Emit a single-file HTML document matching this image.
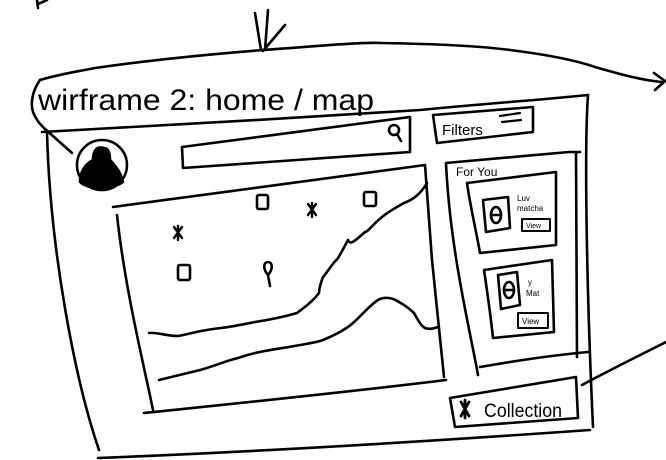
<!DOCTYPE html>
<html><head><meta charset="utf-8"><style>
html,body{margin:0;padding:0;background:#fff;width:666px;height:460px;overflow:hidden}
svg{display:block}
text{font-family:"Liberation Sans",sans-serif;fill:#000}
</style></head><body>
<svg width="666" height="460" viewBox="0 0 666 460" fill="none" stroke="#000" stroke-width="2.6" stroke-linecap="round" stroke-linejoin="round">
<path d="M37 0 L38 8 M38 4 L47 0"/>
<path d="M255 13 L261 50 M268 10 L265 50 M285 25 L263 51"/>
<path d="M40 80 C60 74 75 72 95 68 C150 60 200 55 263 50 C320 46 360 42 382 43 C440 44 480 46 510 50 C550 55 575 60 595 67 C620 74 640 80 662 82"/>
<path d="M654 73 L665 81 L655 90"/>
<path d="M40 80 C33 90 30 102 33 112 C36 120 40 124 44 128 L72 153"/>
<path d="M42 132 C150 126 300 118 420 110 C480 104 540 100 588 95"/>
<text x="38" y="110" font-size="30" stroke="none" textLength="336" lengthAdjust="spacingAndGlyphs">wirframe 2:  home  /  map</text>
<path d="M47 132 C50 250 75 380 99 450"/>
<path d="M98 458 C250 452 420 442 590 430"/>
<path d="M588 95 C584 150 587 300 593 427"/>
<circle cx="102" cy="165" r="25"/>
<path d="M104 148 C97 146 93 150 93 160 C85 164 80 172 80 182 C88 190 112 190 123 182 C121 172 115 165 110 160 C110 152 108 148 104 148 Z" fill="#000"/>
<path d="M182 147 L410 117 L410 152 M182 147 L183 168 L410 152"/>
<circle cx="394" cy="130" r="5"/><path d="M397 134 L401 141"/>
<path d="M433 115 L533 107 L533 132 L437 143 Z"/>
<text x="442" y="135" font-size="15" stroke="none">Filters</text>
<path d="M500 116 L520 113 M502 122 L521 120" stroke-width="2.2"/>
<path d="M113 207 L425 165 M117 215 C125 290 145 370 153 410 M144 413 C250 402 350 392 446 380 M425 165 L432 260 L444 377"/>
<path d="M427 183 C420 195 412 200 404 203 C395 208 388 212 382 217 C372 225 368 232 365 232 C356 240 350 246 348 240 C340 255 336 262 336 260 C328 270 325 275 323 277 C320 285 319 290 319 293 C310 305 300 310 297 313 C280 318 268 320 255 322 C240 325 230 327 221 328 C200 330 190 334 178 336 C165 336 158 332 149 333"/>
<path d="M159 380 C175 376 188 373 200 370 C215 366 225 361 238 358 C255 352 270 350 289 347 C305 344 315 343 323 340 C335 335 345 330 353 323 C362 315 370 305 378 300 C385 296 393 298 399 302 C406 306 411 310 414 313 C418 320 421 326 425 328 C430 330 435 328 438 327"/>
<rect x="257" y="195" width="11" height="14" rx="2"/>
<rect x="364" y="192" width="12" height="14" rx="2"/>
<rect x="178" y="265" width="12" height="15" rx="2"/>
<path d="M174 227 L182 238 M182 227 L174 238 M178 226 L178 240" stroke-width="2.4"/>
<path d="M308 204 L316 215 M316 204 L308 215 M312 203 L312 217" stroke-width="2.4"/>
<path d="M268 275 C262 268 264 262 268 262 C272 262 274 268 268 275 L270 286"/>
<path d="M446 163 L569 152 L580 152 M446 163 C450 250 470 330 478 375 M576 152 L577 357 M480 367 C520 360 555 355 588 352"/>
<text x="456" y="176" font-size="12" stroke="none">For You</text>
<path d="M467 183 L556 172 L556 245 L480 253 C476 230 470 205 467 183 Z"/>
<path d="M483 200 L508 197 L510 228 L486 232 Z"/>
<ellipse cx="496" cy="215" rx="5" ry="8"/><path d="M491 215 L501 215"/>
<text x="517" y="201" font-size="8" stroke="none">Luv</text>
<text x="517" y="211" font-size="8" stroke="none">matcha</text>
<rect x="522" y="219" width="28" height="12" stroke-width="2"/>
<text x="526" y="228" font-size="7" stroke="none">View</text>
<path d="M484 270 L552 260 L554 332 L493 338 C490 310 487 290 484 270 Z"/>
<path d="M498 275 L517 272 L520 305 L501 309 Z"/>
<ellipse cx="509" cy="290" rx="5" ry="8"/><path d="M504 290 L514 290"/>
<text x="528" y="285" font-size="8" stroke="none">y</text>
<text x="526" y="296" font-size="8" stroke="none">Mat</text>
<rect x="518" y="313" width="30" height="15" stroke-width="2"/>
<text x="522" y="324" font-size="8" stroke="none">View</text>
<path d="M450 398 L576 377 L578 418 L455 427 Z"/>
<path d="M461 402 L469 416 M469 402 L461 416 M465 400 L465 418" stroke-width="2.8"/>
<text x="484" y="417" font-size="19" stroke="none" textLength="78" lengthAdjust="spacingAndGlyphs">Collection</text>
<path d="M582 385 C610 370 640 355 666 342"/>
</svg>
</body></html>
